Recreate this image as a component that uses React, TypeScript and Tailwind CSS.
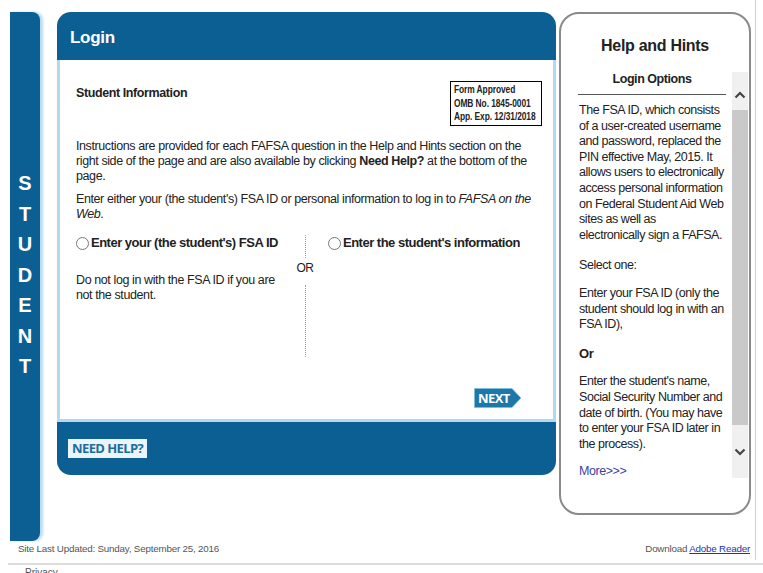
import React from 'react';

const BLUE = 'bg-[#0c5f93]';

const Radio: React.FC = () => (
  <span className="inline-block w-[13px] h-[13px] rounded-full border border-[#777] bg-white mr-[2px] shrink-0" />
);

const Chevron: React.FC<{ dir: 'up' | 'down' }> = ({ dir }) => (
  <svg width="12" height="8" viewBox="0 0 12 8" className="mx-auto">
    <path
      d={dir === 'up' ? 'M1.5 6.5 L6 2 L10.5 6.5' : 'M1.5 1.5 L6 6 L10.5 1.5'}
      fill="none"
      stroke="#444"
      strokeWidth="2.2"
    />
  </svg>
);

// help text keeps the reference's line breaks
const Lines: React.FC<{ lines: string[]; className?: string }> = ({ lines, className }) => (
  <p className={'whitespace-nowrap ' + (className ?? '')}>
    {lines.map((l, i) => (
      <React.Fragment key={i}>
        {l}
        {i < lines.length - 1 && <br />}
      </React.Fragment>
    ))}
  </p>
);

const StudentBar: React.FC = () => (
  <div
    className={`w-[30px] h-[529px] ${BLUE} rounded-tr-[8px] rounded-br-[8px] shadow-[3px_0_3px_#b7dcee] flex flex-col items-center pt-[156px]`}
  >
    {'STUDENT'.split('').map((c, i) => (
      <span key={i} className="text-white font-bold text-[20px] leading-[30.5px] font-['Liberation_Sans',sans-serif]">
        {c}
      </span>
    ))}
  </div>
);

const LoginPanel: React.FC = () => (
  <div className="ml-[17px] w-[499px] flex flex-col font-['Liberation_Sans',sans-serif]">
    <div className={`${BLUE} h-[48px] rounded-t-[14px] flex items-center pl-[13px] pt-[4px]`}>
      <span className="text-white font-bold text-[17px] tracking-[-0.3px]">Login</span>
    </div>
    <div className="h-[362px] bg-white border-x-[3px] border-b-[3px] border-[#b5d9ec] pl-[16px] pr-[12px] text-[#222] text-[12.5px] leading-[15px] tracking-[-0.4px]">
      <div className="flex justify-between items-start pt-[21px]">
        <span className="font-bold text-[12.5px] mt-[5px]">Student Information</span>
        <div className="border border-black px-[3px] py-[1px] w-[92px] mr-[-1px] whitespace-nowrap overflow-hidden">
          <span className="inline-block origin-left scale-x-[0.8] text-[10.5px] leading-[13.5px] font-bold tracking-[-0.1px]">
            Form Approved
            <br />
            OMB No. 1845-0001
            <br />
            App. Exp. 12/31/2018
          </span>
        </div>
      </div>
      <p className="mt-[13px] pr-[8px]">
        Instructions are provided for each FAFSA question in the Help and Hints section on the right side of the
        page and are also available by clicking <b>Need Help?</b> at the bottom of the page.
      </p>
      <p className="mt-[8px] pr-[8px]">
        Enter either your (the student's) FSA ID or personal information to log in to <i>FAFSA on the Web</i>.
      </p>
      <div className="flex mt-[13px]">
        <div className="w-[214px]">
          <div className="flex items-center font-bold text-[13px] leading-[16px] tracking-[-0.5px]">
            <Radio />
            Enter your (the student's) FSA ID
          </div>
          <p className="mt-[22px] w-[205px]">Do not log in with the FSA ID if you are not the student.</p>
        </div>
        <div className="w-[30px] flex flex-col items-center">
          <div className="h-[23px] border-l border-dotted border-[#999]" />
          <span className="text-[12px] leading-[14px] mt-[3px]">OR</span>
          <div className="mt-[10px] h-[72px] border-l border-dotted border-[#999]" />
        </div>
        <div className="ml-[8px]">
          <div className="flex items-center font-bold text-[13px] leading-[16px] tracking-[-0.5px]">
            <Radio />
            Enter the student's information
          </div>
        </div>
      </div>
      <div className="flex justify-end pr-[19px] mt-[31px]">
        <div className="relative w-[48px] h-[20px]">
          <svg width="48" height="20" viewBox="0 0 48 20" className="absolute inset-0">
            <polygon points="0.5,0.5 38,0.5 47,10 38,19.5 0.5,19.5" fill="#1b78a9" stroke="#7fbddc" />
          </svg>
          <span className="relative block pl-[4px] text-white font-bold text-[13px] leading-[20px] tracking-[-0.6px] font-['Open_Sans',sans-serif]">
            NEXT
          </span>
        </div>
      </div>
    </div>
    <div className={`${BLUE} h-[53px] rounded-b-[14px] flex items-center pl-[11px]`}>
      <span className="bg-[#eaf4fa] text-[#1d6c9b] font-bold text-[13px] leading-[19px] px-[4px] tracking-[-0.6px] font-['Open_Sans',sans-serif]">
        NEED HELP?
      </span>
    </div>
  </div>
);

const HelpPanel: React.FC = () => (
  <div className="ml-[3px] w-[192px] h-[503px] border-2 border-[#8a8a8a] rounded-[20px] bg-white flex flex-col font-['Liberation_Sans',sans-serif] text-[#222]">
    <div className="text-center font-bold text-[16px] tracking-[-0.3px] pt-[22px] leading-[20px]">Help and Hints</div>
    <div className="flex mt-[16px] pl-[14px] pr-0">
      <div className="flex-1 text-[12.5px] leading-[15.6px] tracking-[-0.45px] pr-[4px] overflow-hidden">
        <div className="text-center font-bold text-[12.5px] leading-[15px] pb-[7px] border-b border-[#555] mr-[2px] ml-[3px]">
          Login Options
        </div>
        <div className="pl-[4px] pt-[8px]">
          <Lines
            lines={[
              'The FSA ID, which consists',
              'of a user-created username',
              'and password, replaced the',
              'PIN effective May, 2015. It',
              'allows users to electronically',
              'access personal information',
              'on Federal Student Aid Web',
              'sites as well as',
              'electronically sign a FAFSA.',
            ]}
          />
          <p className="mt-[15px]">Select one:</p>
          <Lines
            className="mt-[12px]"
            lines={['Enter your FSA ID (only the', 'student should log in with an', 'FSA ID),']}
          />
          <p className="mt-[13px] font-bold text-[13px]">Or</p>
          <Lines
            className="mt-[13px]"
            lines={[
              "Enter the student's name,",
              'Social Security Number and',
              'date of birth. (You may have',
              'to enter your FSA ID later in',
              'the process).',
            ]}
          />
          <p className="mt-[12px] text-[#3b3fa8]">More&gt;&gt;&gt;</p>
        </div>
      </div>
      <div className="w-[16px] h-[406px] bg-[#f0f0f0] flex flex-col mr-[1px] shrink-0">
        <div className="h-[38px] pt-[19px]">
          <Chevron dir="up" />
        </div>
        <div className="h-[315px] bg-[#c9c9c9]" />
        <div className="h-[53px] pt-[23px]">
          <Chevron dir="down" />
        </div>
      </div>
    </div>
  </div>
);

export default function App() {
  return (
    <div className="w-[763px] h-[573px] overflow-hidden bg-white font-['Liberation_Sans',sans-serif]">
      <div className="w-[756px] h-[560px] border-r border-[#cfcfcf]">
        <div className="flex items-start pt-[12px] pl-[10px]">
          <StudentBar />
          <LoginPanel />
          <HelpPanel />
        </div>
        <div className="flex justify-between items-end pl-[18px] pr-[5px] mt-[2px] text-[9.8px] leading-[12px] text-[#555] tracking-[-0.2px]">
          <span>Site Last Updated: Sunday, September 25, 2016</span>
          <span>
            Download <span className="text-[#2233aa] underline">Adobe Reader</span>
          </span>
        </div>
      </div>
      <div className="mt-[3px] ml-[8px] h-[2px] bg-[#dcdcdc]" />
      <div className="pl-[25px] text-[10px] text-[#555] leading-[12px] mt-[2px]">Privacy</div>
    </div>
  );
}
